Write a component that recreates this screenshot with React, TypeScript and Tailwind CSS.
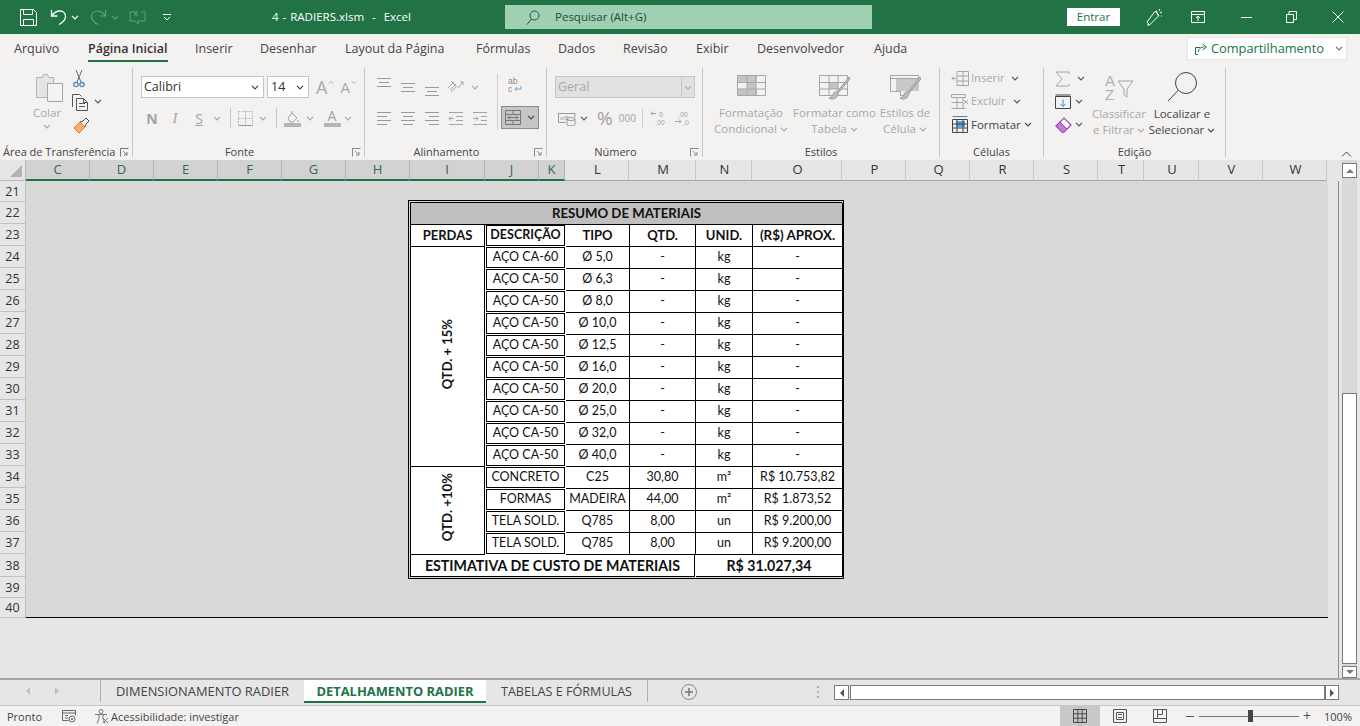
import type { ReactNode } from "react";

const dim = "#a8a8a8";
const dark = "#444444";

function Chev({ className = "", color = "#707070" }: { className?: string; color?: string }) {
  return (
    <svg viewBox="0 0 8 5" className={`h-[5px] w-[8px] shrink-0 ${className}`} fill="none" stroke={color} strokeWidth="1.2">
      <polyline points="1,0.8 4,3.8 7,0.8" />
    </svg>
  );
}

function Icon({ w, h, children, className = "" }: { w: number; h: number; children: ReactNode; className?: string }) {
  return (
    <svg viewBox={`0 0 ${w} ${h}`} width={w} height={h} className={`shrink-0 ${className}`} fill="none">
      {children}
    </svg>
  );
}

// horizontal text lines used by the alignment buttons
function Lines({ rows, w = 16, h = 20, color = "#9a9a9a" }: { rows: number[][]; w?: number; h?: number; color?: string }) {
  return (
    <Icon w={w} h={h}>
      {rows.map(([x1, x2, y]) => (
        <line key={`${x1}-${y}`} x1={x1} x2={x2} y1={y + 0.5} y2={y + 0.5} stroke={color} />
      ))}
    </Icon>
  );
}

function Group({ width, label, labelClass = "text-center", launcher, children }: { width: string; label: string; labelClass?: string; launcher?: boolean; children: ReactNode }) {
  return (
    <div className={`relative flex h-[89px] shrink-0 flex-col border-r border-[#c8c6c4] ${width}`}>
      <div className="flex min-h-0 flex-1">{children}</div>
      <div className={`-mb-[3px] h-[16px] text-[11px] leading-[16px] whitespace-nowrap text-[#444] ${labelClass}`}>{label}</div>
      {launcher && (
        <svg viewBox="0 0 9 9" className="absolute right-[3px] bottom-[0px] h-[9px] w-[9px]" fill="none" stroke="#8a8a8a">
          <path d="M0.5 8.5V0.5H8.5M3 3l4 4M7 4v3H4" />
        </svg>
      )}
    </div>
  );
}

function BigLabel({ lines, chev, color = dim }: { lines: [string, string]; chev?: boolean; color?: string }) {
  return (
    <div className="mt-[3px] text-center text-[11.5px] leading-[16px] whitespace-nowrap" style={{ color }}>
      <div>{lines[0]}</div>
      <div className="flex items-center justify-center gap-[3px]">
        {lines[1]}
        {chev && <Chev color={color} />}
      </div>
    </div>
  );
}

function TitleBar() {
  return (
    <div className="flex h-[34px] shrink-0 items-center bg-[#217346] text-white">
      <div className="flex w-[272px] shrink-0 items-center pl-[20px]">
        <Icon w={17} h={17}>
          <path d="M.5.5h13l3 3v13H.5z" stroke="#fff" />
          <path d="M3.5.5v5h9v-5M3.5 16.5v-6h10v6" stroke="#fff" />
        </Icon>
        <Icon w={17} h={16} className="ml-[13px]">
          <path d="M1.5 1v6h6M1.5 7C4 3.5 7 2 10 2c3.500 0 5.500 2.500 5.500 5.500 0 3-2 5.500-6.500 8" stroke="#fff" strokeWidth="1.300" />
        </Icon>
        <Chev className="ml-[4px]" color="#fff" />
        <Icon w={16} h={16} className="ml-[12px]">
          <path d="M14.500 1v6h-6M14.500 7C12 3.500 9 2 6 2 2.500 2 .5 4.500.5 7.500c0 3 2 5.500 6.500 8" stroke="#5f9e7e" strokeWidth="1.200" />
        </Icon>
        <Chev className="ml-[4px]" color="#5f9e7e" />
        <Icon w={17} h={16} className="ml-[10px]">
          <path d="M1 3h8M5 3l4 4M9 3L5 7M1 3v9h5l3 3v-3h7V3h-4" stroke="#5f9e7e" />
        </Icon>
        <svg viewBox="0 0 8 7" className="ml-[17px] h-[7px] w-[8px]" fill="none" stroke="#fff">
          <path d="M0 .5h8M1 3l3 3 3-3" />
        </svg>
      </div>
      <div className="w-[233px] shrink-0 text-[11.5px] whitespace-pre [word-spacing:1px]">4 - RADIERS.xlsm  -  Excel</div>
      <div className="flex h-[24px] w-[367px] shrink-0 items-center bg-[#a0cfb3] pl-[21px] text-[11.5px] text-[#1f4e37]">
        <Icon w={14} h={15}>
          <circle cx="8.500" cy="5.500" r="4.500" stroke="#24553c" />
          <path d="M5.500 9L1 14.500" stroke="#24553c" />
        </Icon>
        <span className="ml-[15px]">Pesquisar (Alt+G)</span>
      </div>
      <div className="ml-[195px] flex h-[18px] w-[53px] shrink-0 items-center justify-center bg-white text-[11.5px] text-[#217346]">Entrar</div>
      <Icon w={17} h={18} className="ml-[26px]">
        <path d="M1 14l2.500 3 9-9-2-5-2 1zM3.500 17L1 17M10 4l3 4M13 1l1 2M16 4l-2 1M16 8h-1" stroke="#fff" />
      </Icon>
      <Icon w={14} h={12} className="ml-[28px]">
        <path d="M.5.500h13v11H.5zM.5 3.500h13M7 10V5M5 7l2-2 2 2" stroke="#fff" />
      </Icon>
      <div className="ml-[36px] h-px w-[11px] bg-white" />
      <Icon w={11} h={12} className="ml-[34px]">
        <path d="M.5 3.500h7v8h-7zM3 3.500V.5h7.500v8h-3" stroke="#fff" />
      </Icon>
      <Icon w={12} h={12} className="ml-[35px]">
        <path d="M.5.500l11 11M11.500.500l-11 11" stroke="#fff" />
      </Icon>
    </div>
  );
}

const ribbonTabs = [
  { label: "Arquivo", width: "w-[74px]" },
  { label: "Página Inicial", width: "w-[107px]", active: true },
  { label: "Inserir", width: "w-[65px]" },
  { label: "Desenhar", width: "w-[85px]" },
  { label: "Layout da Página", width: "w-[131px]" },
  { label: "Fórmulas", width: "w-[82px]" },
  { label: "Dados", width: "w-[65px]" },
  { label: "Revisão", width: "w-[73px]" },
  { label: "Exibir", width: "w-[61px]" },
  { label: "Desenvolvedor", width: "w-[117px]" },
  { label: "Ajuda", width: "w-[40px]" },
];

function RibbonTabs() {
  return (
    <div className="flex h-[28px] shrink-0 items-start bg-[#f3f2f1] pl-[14px] text-[12.5px] whitespace-nowrap text-[#444]">
      {ribbonTabs.map((t) => (
        <div key={t.label} className={`h-[28px] shrink-0 leading-[30px] ${t.width}`}>
          {t.active ? (
            <div className="h-[28px] w-[80px] border-b-[2px] border-[#217346] font-semibold text-[#333]">{t.label}</div>
          ) : (
            t.label
          )}
        </div>
      ))}
      <div className="ml-[273px] flex h-[23px] w-[160px] shrink-0 translate-y-[3px] items-center border border-[#e6e6e6] bg-white pl-[7px] text-[12.8px] font-medium text-[#217346]">
        <Icon w={13} h={12}>
          <path d="M3 11.500H.5V4.500H5M3.500 9c0-3 2-5 6-5M7.500 1l4 3-4 3" stroke="#217346" />
        </Icon>
        <span className="ml-[3px]">Compartilhamento</span>
        <Chev className="ml-[11px]" />
      </div>
    </div>
  );
}

function ClipboardGroup() {
  return (
    <Group width="w-[133px]" label="Área de Transferência" labelClass="pl-[3px] text-left">
      <div className="ml-[24px] flex w-[46px] flex-col items-center pt-[5px]">
        <Icon w={28} h={30} className="ml-[5px]">
          <path d="M.5 4.500h6l1-3h4l1 3h5v6h-6v14H.5z" fill="#e4e4e4" stroke="#b4b4b4" />
          <path d="M11.500 10.500h15v18h-15z" fill="#f3f3f3" stroke="#a6a6a6" />
        </Icon>
        <div className="mt-[2px] text-[11.5px] leading-[16px] text-[#a8a8a8]">Colar</div>
        <Chev className="mt-[3px]" color="#a8a8a8" />
      </div>
      <div className="flex flex-col pt-[2px] pl-[2px]">
        <Icon w={12} h={18} className="ml-[1px]">
          <path d="M3 0l5 12M9 0L4 12" stroke="#666" />
          <circle cx="3" cy="14.500" r="2.200" stroke="#3a87c8" strokeWidth="1.200" />
          <circle cx="9" cy="14.500" r="2.200" stroke="#3a87c8" strokeWidth="1.200" />
        </Icon>
        <div className="mt-[6px] flex items-center">
          <Icon w={17} h={17}>
            <path d="M.5 13V.5h7l2 2M4.500 4.500h7l4 4v8h-11z" stroke="#555" />
            <path d="M7 9.500h6M7 12.500h6M11.500 4.500v4h4" stroke="#555" />
          </Icon>
          <Chev className="ml-[5px] -mt-[2px]" color="#555" />
        </div>
        <Icon w={17} h={17} className="mt-[6px] ml-[1px]">
          <path d="M1 11l6-6 5 5-6 6z" fill="#f2b36a" stroke="#d07a2a" />
          <path d="M7 5l3-1 3-3 3 3-3 3-1 3" stroke="#555" />
        </Icon>
      </div>
      <svg viewBox="0 0 9 9" className="absolute right-[3px] bottom-[0px] h-[9px] w-[9px]" fill="none" stroke="#777">
        <path d="M0.5 8.5V0.5H8.5M3 3l4 4M7 4v3H4" />
      </svg>
    </Group>
  );
}

function FontGroup() {
  return (
    <Group width="w-[232px]" label="Fonte" labelClass="pr-[18px] text-center" launcher>
      <div className="flex flex-col pt-[8px] pl-[8px]">
        <div className="flex h-[22px] items-center">
          <div className="flex h-[22px] w-[123px] items-center justify-between border border-[#c6c6c6] bg-white pt-px pr-[4px] pl-[2px] text-[12.5px] text-[#333]">
            Calibri
            <Chev color="#444" />
          </div>
          <div className="ml-[3px] flex h-[22px] w-[42px] items-center justify-between border border-[#c6c6c6] bg-white pt-px pr-[4px] pl-[3px] text-[12.5px] text-[#333]">
            14
            <Chev color="#444" />
          </div>
          <span className="ml-[7px] text-[18px] leading-none text-[#a8a8a8]">A</span>
          <Chev className="-mt-[10px] rotate-180 scale-75" color="#a8a8a8" />
          <span className="ml-[5px] text-[15px] leading-none text-[#a8a8a8]">A</span>
          <Chev className="-mt-[10px] scale-75" color="#a8a8a8" />
        </div>
        <div className="mt-[10px] flex h-[20px] items-center text-[#a3a3a3]">
          <span className="w-[22px] text-center text-[14px] font-bold">N</span>
          <span className="w-[24px] text-center font-['Liberation_Serif',serif] text-[15px] italic">I</span>
          <span className="w-[24px] text-center text-[14px] underline">S</span>
          <Chev className="ml-[2px]" color="#a8a8a8" />
          <div className="ml-[9px] h-[20px] w-px bg-[#c8c6c4]" />
          <Icon w={15} h={15} className="ml-[7px]">
            <path d="M.5.500h14v14H.5zM7.500.500v14M.5 7.500h14" stroke="#b8b8b8" strokeDasharray="1.500 1" />
            <path d="M.5 14.500h14" stroke="#999" />
          </Icon>
          <Chev className="ml-[6px]" color="#a8a8a8" />
          <div className="ml-[9px] h-[20px] w-px bg-[#c8c6c4]" />
          <Icon w={17} h={17} className="ml-[7px]">
            <path d="M4 8l4-5 5 5-4 4H6zM8 3V1" stroke="#a3a3a3" />
            <path d="M14 10v2" stroke="#a3a3a3" />
            <rect y="13" width="17" height="4" fill="#b5b5b5" />
          </Icon>
          <Chev className="ml-[5px]" color="#a8a8a8" />
          <div className="ml-[9px] flex w-[18px] flex-col items-center">
            <span className="text-[14px] leading-[14px]">A</span>
            <div className="h-[4px] w-[17px] bg-[#b5b5b5]" />
          </div>
          <Chev className="ml-[3px]" color="#a8a8a8" />
        </div>
      </div>
    </Group>
  );
}

function AlignGroup() {
  return (
    <Group width="w-[182px]" label="Alinhamento" labelClass="pr-[18px] text-center" launcher>
      <div className="flex w-[132px] shrink-0 flex-col pt-[8px] pl-[7px]">
        <div className="flex h-[22px] items-center">
          <div className="flex w-[24px] justify-center"><Lines rows={[[1, 15, 1], [3, 13, 5], [1, 15, 9]]} /></div>
          <div className="flex w-[24px] justify-center"><Lines rows={[[1, 15, 6], [3, 13, 10], [1, 15, 14]]} /></div>
          <div className="flex w-[24px] justify-center"><Lines rows={[[1, 15, 10], [3, 13, 14], [1, 15, 18]]} /></div>
          <div className="flex w-[24px] justify-center">
            <Icon w={18} h={16}>
              <path d="M1 9l6-6M4 2l6 6M3 11l6-6M11 9l5-6M13 3h3v3M4 13l6-6" stroke="#a6a6a6" />
            </Icon>
          </div>
          <Chev className="ml-[3px]" color="#a8a8a8" />
        </div>
        <div className="mt-[9px] flex h-[22px] items-center">
          <div className="flex w-[24px] justify-center"><Lines rows={[[1, 15, 4], [1, 11, 8], [1, 15, 12], [1, 11, 16]]} /></div>
          <div className="flex w-[24px] justify-center"><Lines rows={[[1, 15, 4], [3, 13, 8], [1, 15, 12], [3, 13, 16]]} /></div>
          <div className="flex w-[24px] justify-center"><Lines rows={[[1, 15, 4], [5, 15, 8], [1, 15, 12], [5, 15, 16]]} /></div>
          <div className="flex w-[24px] justify-center">
            <Icon w={16} h={20}>
              <path d="M1 4.500h14M8 8.500h7M8 12.500h7M1 16.500h14M6 10.500H1M3 8.500l-2 2 2 2" stroke="#a6a6a6" />
            </Icon>
          </div>
          <div className="flex w-[24px] justify-center">
            <Icon w={16} h={20}>
              <path d="M1 4.500h14M9 8.500h6M9 12.500h6M1 16.500h14M1 10.500h5M4 8.500l2 2-2 2" stroke="#a6a6a6" />
            </Icon>
          </div>
        </div>
      </div>
      <div className="my-[6px] flex w-[45px] shrink-0 flex-col self-start border-l border-[#d2d0ce] pl-[3px]">
        <div className="flex h-[22px] items-start justify-center pt-[3px] pr-[14px]">
          <Icon w={14} h={16}>
            <text x="0" y="7" fontSize="8.500" fill="#8a8a8a" fontFamily="Liberation Sans">ab</text>
            <text x="0" y="15" fontSize="8.500" fill="#8a8a8a" fontFamily="Liberation Sans">c</text>
            <path d="M13 9v3H7M9 10l-2 2 2 2" stroke="#6fa8d0" />
          </Icon>
        </div>
        <div className="mt-[10px] flex h-[23px] w-[38px] items-center border border-[#8c8c8c] bg-[#c6c6c6] pl-[3px]">
          <Icon w={16} h={15}>
            <path d="M.5.500h15v14H.5zM.5 4.500h15M.5 10.500h15M8 .5v4M8 10.500v4M3 7.500h10M5 5.500l-2 2 2 2M11 5.500l2 2-2 2" stroke="#777" />
          </Icon>
          <Chev className="ml-[6px]" color="#444" />
        </div>
      </div>
    </Group>
  );
}

function NumberGroup() {
  return (
    <Group width="w-[156px]" label="Número" labelClass="pr-[18px] text-center" launcher>
      <div className="flex flex-col pt-[8px] pl-[8px]">
        <div className="flex h-[22px] w-[140px] items-center justify-between border border-[#c6c6c6] bg-[#e1e1e1] pl-[2px] text-[12.5px] text-[#a8a8a8]">
          <span className="pt-px">Geral</span>
          <div className="flex h-full w-[13px] items-center justify-center border-l border-[#c6c6c6]">
            <Chev color="#a8a8a8" />
          </div>
        </div>
        <div className="mt-[10px] flex h-[20px] items-center text-[#a3a3a3]">
          <Icon w={18} h={15} className="ml-[3px]">
            <path d="M.5 2.500h9M.5 2.500v9h7M9 2.500h8v4" stroke="#9a9a9a" />
            <text x="2" y="9" fontSize="6" fill="#9a9a9a" fontFamily="Liberation Sans">cr$</text>
            <ellipse cx="13" cy="8" rx="4" ry="1.500" stroke="#9a9a9a" />
            <path d="M9 8v6c0 1 8 1 8 0V8" stroke="#9a9a9a" />
          </Icon>
          <Chev className="ml-[4px]" color="#555" />
          <span className="ml-[9px] text-[19px] leading-none">%</span>
          <span className="ml-[6px] text-[10px]">000</span>
          <div className="ml-[6px] h-[20px] w-px bg-[#d2d0ce]" />
          <Icon w={17} h={16} className="ml-[7px]">
            <path d="M6 3.500H1M3 1.500l-2 2 2 2" stroke="#a3a3a3" />
            <text x="9" y="7" fontSize="7" fill="#a3a3a3" fontFamily="Liberation Sans">0</text>
            <text x="5" y="15" fontSize="7" fill="#a3a3a3" fontFamily="Liberation Sans">,00</text>
          </Icon>
          <Icon w={17} h={16} className="ml-[7px]">
            <text x="4" y="7" fontSize="7" fill="#a3a3a3" fontFamily="Liberation Sans">,00</text>
            <path d="M1 11.500h6M5 9.500l2 2-2 2" stroke="#a3a3a3" />
            <text x="9" y="15" fontSize="7" fill="#a3a3a3" fontFamily="Liberation Sans">,0</text>
          </Icon>
        </div>
      </div>
    </Group>
  );
}

function GridBase() {
  return <path d="M.5.500h28v20H.5zM.5 7.500h28M.5 14h28M10 .5v20M19 .5v20" stroke="#a6a6a6" />;
}

function StylesGroup() {
  return (
    <Group width="w-[237px]" label="Estilos">
      <div className="ml-[6px] flex w-[84px] flex-col items-center pt-[7px]">
        <Icon w={29} h={27}>
          <rect x="1" y="1" width="19" height="6" fill="#c4c4c4" />
          <rect x="1" y="14" width="19" height="7" fill="#c4c4c4" />
          <rect x="10" y="7" width="9" height="7" fill="#c4c4c4" />
          <GridBase />
        </Icon>
        <BigLabel lines={["Formatação", "Condicional"]} chev />
      </div>
      <div className="flex w-[83px] flex-col items-center pt-[7px]">
        <Icon w={31} h={27}>
          <rect x="10" y="7" width="9" height="7" fill="#c4c4c4" />
          <GridBase />
          <path d="M30 2L18 17c-2-1-4 1-4 3-1 2-3 3-4 3 3 2 7 1 8 -2 1-1 1-2 1-3L31 4z" fill="#bdbdbd" stroke="#9a9a9a" />
        </Icon>
        <BigLabel lines={["Formatar como", "Tabela"]} chev />
      </div>
      <div className="flex w-[58px] flex-col items-center pt-[7px]">
        <Icon w={31} h={27}>
          <rect x="6" y="4" width="23" height="12" fill="#c8c8c8" />
          <path d="M.5.500h28v3H.5zM.5.500v16h10v4h7" stroke="#a6a6a6" />
          <path d="M30 2L18 17c-2-1-4 1-4 3-1 2-3 3-4 3 3 2 7 1 8 -2 1-1 1-2 1-3L31 4z" fill="#bdbdbd" stroke="#9a9a9a" />
        </Icon>
        <BigLabel lines={["Estilos de", "Célula"]} chev />
      </div>
    </Group>
  );
}

function CellsGroup() {
  return (
    <Group width="w-[104px]" label="Células">
      <div className="-mt-px flex flex-col pl-[11px] text-[11.2px]">
        <div className="flex h-[23px] items-center text-[#a8a8a8]">
          <Icon w={18} h={15}>
            <path d="M6 .5h11.500v14H6zM6 5h11.500M6 10h11.500M12 .5v14M5 7.500H1M3 5.500l-2 2 2 2" stroke="#a6a6a6" />
          </Icon>
          <span className="ml-[2px] w-[40px]">Inserir</span>
          <Chev color="#555" />
        </div>
        <div className="flex h-[23px] items-center text-[#a8a8a8]">
          <Icon w={18} h={15}>
            <path d="M.5.500h14v3H.5zM6 3.500v11h6v-11M.5 8.500h11M.5 14.500h14M13 6l4 4M17 6l-4 4" stroke="#a6a6a6" />
          </Icon>
          <span className="ml-[2px] w-[42px]">Excluir</span>
          <Chev color="#555" />
        </div>
        <div className="flex h-[23px] items-center text-[#444]">
          <Icon w={18} h={17}>
            <rect x="5" y="5" width="9" height="6" fill="#55a7dc" />
            <path d="M1.500 3.500h15v13h-15zM1.500 8h15M1.500 12h15M6 3.500v13M12 3.500v13" stroke="#444" />
            <path d="M1.500.5h15" stroke="#3a87c8" />
          </Icon>
          <span className="ml-[2px] text-[11.5px]">Formatar</span>
          <Chev className="ml-[3px]" color="#444" />
        </div>
      </div>
    </Group>
  );
}

function EditGroup() {
  return (
    <Group width="w-[182px]" label="Edição">
      <div className="-mt-px flex w-[48px] shrink-0 flex-col pl-[11px]">
        <div className="flex h-[23px] items-center">
          <Icon w={15} h={16}>
            <path d="M14 3V1H1l6 7-6 7h13v-2" stroke="#a6a6a6" />
          </Icon>
          <Chev className="ml-[7px]" color="#555" />
        </div>
        <div className="flex h-[23px] items-center">
          <Icon w={16} h={15}>
            <path d="M.5 2.500h15v12H.5z" stroke="#444" />
            <path d="M.5 1h15" stroke="#444" />
            <path d="M8 5.500v7M5.500 10L8 12.500 10.500 10" stroke="#2f8fd0" />
          </Icon>
          <Chev className="ml-[4px]" color="#555" />
        </div>
        <div className="flex h-[23px] items-center">
          <Icon w={17} h={16}>
            <path d="M1 9l8-8 7 7-8 8z" fill="#fff" stroke="#a040b0" strokeWidth="1.200" />
            <path d="M1 9l4-4 7 7-4 4z" fill="#c678d2" stroke="#a040b0" />
          </Icon>
          <Chev className="ml-[3px]" color="#555" />
        </div>
      </div>
      <div className="flex w-[54px] shrink-0 flex-col items-center pt-[4px]">
        <Icon w={29} h={31}>
          <text x="0" y="14" fontSize="15" fill="#b0b0b0" fontFamily="Liberation Sans">A</text>
          <text x="0" y="28" fontSize="15" fill="#b0b0b0" fontFamily="Liberation Sans">Z</text>
          <path d="M13 9h15l-6 8v8l-3-2v-6z" stroke="#a6a6a6" />
        </Icon>
        <BigLabel lines={["Classificar", "e Filtrar"]} chev />
      </div>
      <div className="flex w-[72px] shrink-0 flex-col items-center pt-[4px]">
        <Icon w={30} h={31}>
          <circle cx="19" cy="11" r="10.500" stroke="#444" />
          <path d="M11.500 18L1 29" stroke="#444" />
        </Icon>
        <BigLabel lines={["Localizar e", "Selecionar"]} chev color={dark} />
      </div>
    </Group>
  );
}

function Ribbon() {
  return (
    <div className="flex h-[98px] shrink-0 items-start bg-[#f3f2f1] pt-[6px] font-['Open_Sans',sans-serif]">
      <ClipboardGroup />
      <FontGroup />
      <AlignGroup />
      <NumberGroup />
      <StylesGroup />
      <CellsGroup />
      <EditGroup />
      <div className="flex h-[91px] flex-1 items-end justify-end pr-[8px] pb-[2px]">
        <svg viewBox="0 0 11 6" className="h-[6px] w-[11px]" fill="none" stroke="#444">
          <polyline points="1,5.500 5.500,1 10,5.500" />
        </svg>
      </div>
    </div>
  );
}

const columns = [
  { n: "C", w: "w-[64px]", on: true },
  { n: "D", w: "w-[64px]", on: true },
  { n: "E", w: "w-[64px]", on: true },
  { n: "F", w: "w-[64px]", on: true },
  { n: "G", w: "w-[64px]", on: true },
  { n: "H", w: "w-[64px]", on: true },
  { n: "I", w: "w-[75px]", on: true },
  { n: "J", w: "w-[54px]", on: true },
  { n: "K", w: "w-[26px]", on: true },
  { n: "L", w: "w-[64px]" },
  { n: "M", w: "w-[67px]" },
  { n: "N", w: "w-[56px]" },
  { n: "O", w: "w-[90px]" },
  { n: "P", w: "w-[64px]" },
  { n: "Q", w: "w-[64px]" },
  { n: "R", w: "w-[64px]" },
  { n: "S", w: "w-[64px]" },
  { n: "T", w: "w-[46px]" },
  { n: "U", w: "w-[55px]" },
  { n: "V", w: "w-[64px]" },
  { n: "W", w: "w-[64px]" },
];

function ColumnHeaders() {
  return (
    <div className="flex h-[21px] shrink-0 bg-[#e6e6e6] font-['Open_Sans',sans-serif] text-[13px]">
      <div className="flex h-[21px] w-[26px] shrink-0 items-end justify-end border-r border-b border-[#b8b8b8] pr-[3px] pb-[3px]">
        <div className="h-0 w-0 border-b-[12px] border-l-[12px] border-b-[#b4b4b4] border-l-transparent" />
      </div>
      {columns.map((c) => (
        <div
          key={c.n}
          className={
            c.on
              ? `flex h-[21px] shrink-0 items-center justify-center border-r border-b-2 border-r-[#b4b4b4] border-b-[#217346] bg-[#d2d2d2] text-[#2f6b4c] ${c.w}`
              : `flex h-[21px] shrink-0 items-center justify-center border-r border-b border-r-[#c8c8c8] border-b-[#a6a6a6] pl-[2px] text-[#333] ${c.w}`
          }
        >
          {c.n}
        </div>
      ))}
    </div>
  );
}

const rowHeights = [
  [21, 21], [22, 22], [23, 22], [24, 22], [25, 22], [26, 22], [27, 22], [28, 22], [29, 22], [30, 22],
  [31, 22], [32, 22], [33, 22], [34, 22], [35, 22], [36, 22], [37, 22], [38, 23], [39, 21], [40, 20],
];

const tcell = "flex items-center justify-center border-r border-b border-black bg-white";
const dcell = "flex items-center justify-center border border-black bg-white mr-px mb-px";
const steel = [
  ["AÇO CA-60", "Ø 5,0"],
  ["AÇO CA-50", "Ø 6,3"],
  ["AÇO CA-50", "Ø 8,0"],
  ["AÇO CA-50", "Ø 10,0"],
  ["AÇO CA-50", "Ø 12,5"],
  ["AÇO CA-50", "Ø 16,0"],
  ["AÇO CA-50", "Ø 20,0"],
  ["AÇO CA-50", "Ø 25,0"],
  ["AÇO CA-50", "Ø 32,0"],
  ["AÇO CA-50", "Ø 40,0"],
];
const others = [
  ["CONCRETO", "C25", "30,80", "m³", "R$ 10.753,82"],
  ["FORMAS", "MADEIRA", "44,00", "m²", "R$ 1.873,52"],
  ["TELA SOLD.", "Q785", "8,00", "un", "R$ 9.200,00"],
  ["TELA SOLD.", "Q785", "8,00", "un", "R$ 9.200,00"],
];

function MaterialsTable() {
  return (
    <div className="ml-[382px] w-[436px] border border-black p-px">
      <div className="grid grid-cols-[75px_80px_64px_66px_57px_90px] auto-rows-[22px] border-t border-l border-black bg-white font-['Lato',sans-serif] text-[12.5px] text-[#111]">
        <div className="col-span-6 flex items-center justify-center border-r border-b border-black bg-[#bfbfbf] text-[13.2px] font-bold">RESUMO DE MATERIAIS</div>
        <div className={`${tcell} mr-px text-[13px] font-bold`}>PERDAS</div>
        <div className={`${dcell} font-bold`}>DESCRIÇÃO</div>
        <div className={`${tcell} text-[13px] font-bold`}>TIPO</div>
        <div className={`${tcell} text-[13px] font-bold`}>QTD.</div>
        <div className={`${tcell} text-[13px] font-bold`}>UNID.</div>
        <div className={`${tcell} text-[13.4px] font-bold`}>(R$) APROX.</div>
        {steel.map((row, i) => (
          <div key={i} className="contents">
            {i === 0 && (
              <div className={`${tcell} row-span-10 mr-px pb-[5px]`}>
                <span className="rotate-180 text-[13px] font-bold [writing-mode:vertical-rl]">QTD. + 15%</span>
              </div>
            )}
            <div className={dcell}>{row[0]}</div>
            <div className={tcell}>{row[1]}</div>
            <div className={tcell}>-</div>
            <div className={tcell}>kg</div>
            <div className={tcell}>-</div>
          </div>
        ))}
        {others.map((row, i) => (
          <div key={i} className="contents">
            {i === 0 && (
              <div className={`${tcell} row-span-4 mr-px pb-[6px]`}>
                <span className="rotate-180 text-[13.2px] font-bold [writing-mode:vertical-rl]">QTD. +10%</span>
              </div>
            )}
            <div className={dcell}>{row[0]}</div>
            {row.slice(1).map((v, j) => (
              <div key={j} className={tcell}>{v}</div>
            ))}
          </div>
        ))}
        <div className={`${tcell} col-span-4 mr-px text-[14.2px] font-bold`}>ESTIMATIVA DE CUSTO DE MATERIAIS</div>
        <div className={`${tcell} col-span-2 text-[14.2px] font-bold`}>R$ 31.027,34</div>
      </div>
    </div>
  );
}

function SheetBody() {
  return (
    <div className="flex h-[437px] shrink-0">
      <div className="w-[26px] shrink-0 bg-[#e6e6e6] font-['Open_Sans',sans-serif] text-[12.5px] text-[#333]">
        {rowHeights.map(([n, h]) => (
          <div key={n} className="flex items-center justify-center border-r border-b border-[#c0c0c0] pt-[2px]" style={{ height: h }}>
            {n}
          </div>
        ))}
      </div>
      <div className="w-[1302px] shrink-0 border-b border-black bg-[#d9d9d9] pt-[19px]">
        <MaterialsTable />
      </div>
    </div>
  );
}

function VerticalScroll() {
  return (
    <div className="flex w-[21px] shrink-0 flex-col items-center bg-[#e6e6e6]">
      <div className="flex h-[518px] w-[15px] flex-col bg-[#d9d9d9] pt-[3px]">
        <div className="flex h-[15px] w-[15px] shrink-0 items-center justify-center border border-[#7a7a7a] bg-white">
          <div className="h-0 w-0 border-x-[4px] border-b-[4px] border-x-transparent border-b-[#777]" />
        </div>
        <div className="mt-[215px] h-[271px] w-[15px] shrink-0 border border-[#7a7a7a] bg-white" />
        <div className="mt-[2px] flex h-[12px] w-[15px] shrink-0 items-center justify-center border border-[#7a7a7a] bg-white">
          <div className="h-0 w-0 border-x-[4px] border-t-[4px] border-x-transparent border-t-[#777]" />
        </div>
      </div>
    </div>
  );
}

function SheetTabs() {
  return (
    <div className="flex h-[28px] shrink-0 items-start border-t-2 border-b border-t-[#a6a6a6] border-b-[#c8c8c8] bg-[#e6e6e6] font-['Open_Sans',sans-serif] text-[12.9px] whitespace-nowrap text-[#444]">
      <div className="flex h-[22px] w-[101px] shrink-0 items-center border-r border-[#b0b0b0] pl-[26px]">
        <div className="h-0 w-0 border-y-[4px] border-r-[4px] border-y-transparent border-r-[#c0c0c0]" />
        <div className="ml-[25px] h-0 w-0 border-y-[4px] border-l-[4px] border-y-transparent border-l-[#c0c0c0]" />
      </div>
      <div className="flex h-[22px] w-[203px] shrink-0 items-center justify-center pt-[2px]">DIMENSIONAMENTO RADIER</div>
      <div className="flex h-[23px] w-[182px] shrink-0 items-center justify-center border-b-2 border-[#217346] bg-white pt-[2px] font-bold text-[#217346]">DETALHAMENTO RADIER</div>
      <div className="flex h-[22px] w-[162px] shrink-0 items-center justify-center border-r border-[#b0b0b0] pt-[2px] text-[12.6px]">TABELAS E FÓRMULAS</div>
      <Icon w={16} h={16} className="mt-[4px] ml-[33px]">
        <circle cx="8" cy="8" r="7.500" stroke="#8a8a8a" />
        <path d="M8 4v8M4 8h8" stroke="#777" strokeWidth="1.500" />
      </Icon>
      <div className="mt-[6px] ml-[120px] flex h-[12px] w-[2px] flex-col justify-between">
        <div className="h-[2px] w-[2px] bg-[#b0b0b0]" />
        <div className="h-[2px] w-[2px] bg-[#b0b0b0]" />
        <div className="h-[2px] w-[2px] bg-[#b0b0b0]" />
      </div>
      <div className="mt-[5px] ml-[15px] flex h-[15px] items-stretch">
        <div className="flex w-[15px] items-center justify-center border border-[#7a7a7a] bg-white">
          <div className="h-0 w-0 border-y-[4px] border-r-[4px] border-y-transparent border-r-[#555]" />
        </div>
        <div className="ml-px w-[475px] border border-[#7a7a7a] bg-white" />
        <div className="flex w-[14px] items-center justify-center border border-[#7a7a7a] bg-white">
          <div className="h-0 w-0 border-y-[4px] border-l-[4px] border-y-transparent border-l-[#555]" />
        </div>
      </div>
    </div>
  );
}

function StatusBar() {
  return (
    <div className="flex h-[20px] shrink-0 items-center bg-[#f3f2f1] font-['Open_Sans',sans-serif] text-[11px] whitespace-nowrap text-[#444]">
      <span className="ml-[7px] w-[55px] pt-[2px]">Pronto</span>
      <Icon w={14} h={14}>
        <path d="M.5 1.500h13M.5 4h13M.5 1.500v10h6M13.500 1.500v5M3 6.500h3M3 9h3" stroke="#666" />
        <circle cx="10" cy="10" r="3" stroke="#666" />
        <circle cx="10" cy="10" r="1" fill="#666" />
      </Icon>
      <Icon w={15} h={15} className="ml-[18px]">
        <circle cx="7" cy="2.500" r="2" stroke="#777" />
        <path d="M1 5.500h12M5 5.500v4l-2 5M9 5.500v4l2 5" stroke="#777" />
        <path d="M9 9l5 5M14 9l-5 5" stroke="#777" />
      </Icon>
      <span className="ml-[2px] w-[949px] pt-[2px]">Acessibilidade: investigar</span>
      <div className="flex h-[20px] w-[40px] items-center justify-center bg-[#c8c8c8]">
        <Icon w={14} h={14}>
          <path d="M.5.500h13v13H.5zM4.800.5v13M9.200.5v13M.5 4.800h13M.5 9.200h13" stroke="#444" />
        </Icon>
      </div>
      <Icon w={14} h={14} className="ml-[13px]">
        <path d="M.5.500h13v13H.5zM3.500 3.500h7v7h-7zM5 5.500h4M5 8.500h4" stroke="#555" />
      </Icon>
      <Icon w={14} h={14} className="ml-[26px]">
        <path d="M.5.500h13v13H.5zM.5 9.500h13M4.500.5v9M9.500.5v5h-5" stroke="#555" />
      </Icon>
      <div className="ml-[19px] h-px w-[8px] bg-[#555]" />
      <div className="ml-[5px] flex w-[100px] items-center">
        <div className="h-px w-[49px] bg-[#777]" />
        <div className="h-[12px] w-[5px] bg-[#444]" />
        <div className="h-px w-[46px] bg-[#777]" />
      </div>
      <span className="ml-[4px] text-[14px] leading-none text-[#555]">+</span>
      <span className="ml-[13px] pt-[2px] text-[11px]">100%</span>
    </div>
  );
}

export default function App() {
  return (
    <div className="flex h-[726px] w-[1360px] flex-col overflow-hidden bg-[#f3f2f1] font-['Open_Sans',sans-serif]">
      <TitleBar />
      <RibbonTabs />
      <Ribbon />
      <div className="flex h-[518px] shrink-0 bg-[#e6e6e6]">
        <div className="flex w-[1339px] shrink-0 flex-col">
          <ColumnHeaders />
          <div className="border-r border-[#8a8a8a]">
            <SheetBody />
          </div>
          <div className="flex-1 border-r border-[#8a8a8a]" />
        </div>
        <VerticalScroll />
      </div>
      <SheetTabs />
      <StatusBar />
    </div>
  );
}
